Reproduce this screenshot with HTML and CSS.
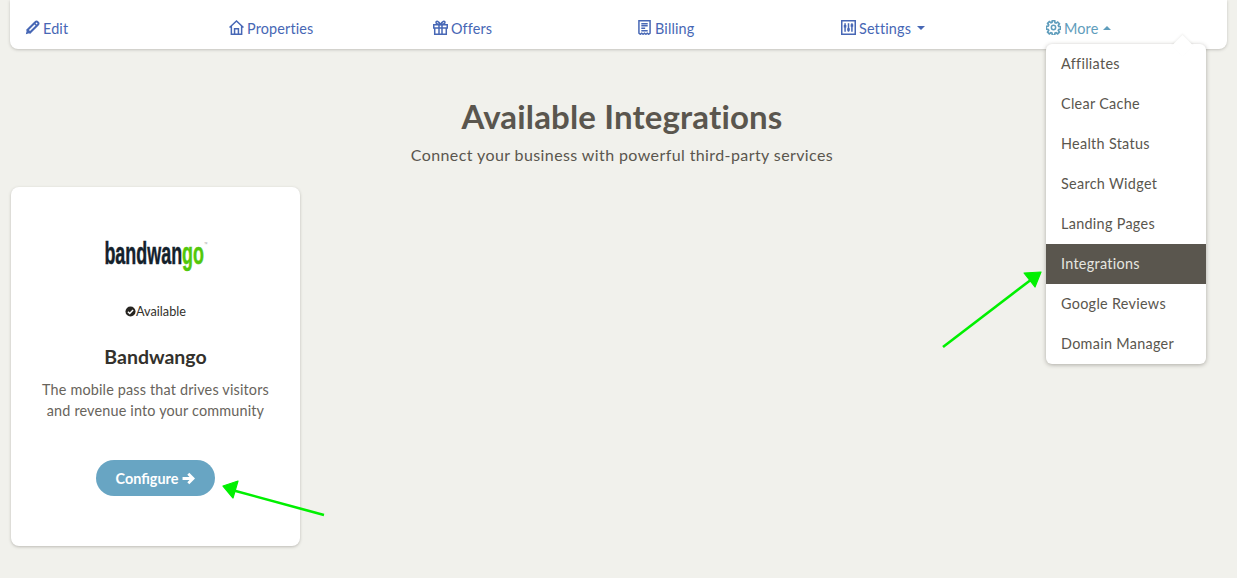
FILE: index.html
```html
<!DOCTYPE html>
<html lang="en">
<head>
<meta charset="utf-8">
<title>Available Integrations</title>
<link rel="stylesheet" href="styles.css">
</head>
<body>
<nav class="topnav">
  <a class="nav-item"><svg class="ico" viewBox="0 0 14 14"><path class="fl" d="M.8 13.2l1-4.2 2.9 3.2z"/><path class="ln thick" d="M2.3 9.3L9.8 1.8a1.3 1.3 0 0 1 1.9 0l.5.5a1.3 1.3 0 0 1 0 1.9L4.7 11.7z"/><path class="ln" d="M8.7 3l2.3 2.3"/></svg>Edit</a>
  <a class="nav-item"><svg class="ico" viewBox="0 0 14 14"><path class="ln" d="M.5 7L7 1l6.5 6M2.2 5.6v7.6h9.6V5.6"/><path class="ln" d="M5.2 13V8.2h3.6V13"/></svg>Properties</a>
  <a class="nav-item"><svg class="ico" viewBox="0 0 14 14"><path class="ln" d="M.7 4.4h12.6v3H.7zM1.6 7.4v6h10.8v-6M5.6 4.4v9M8.4 4.4v9"/><path class="ln" d="M7 4.2C5.5 1 3 .6 2.8 2.2 2.7 3.6 5 4.2 7 4.2zM7 4.2c1.5-3.2 4-3.6 4.2-2 .1 1.4-2.2 2-4.2 2z"/></svg>Offers</a>
  <a class="nav-item"><svg class="ico" viewBox="0 0 14 14"><path class="ln" d="M1.8.7h10.4v11.6l-1.3 1-1.3-1-1.3 1-1.3-1-1.3 1-1.3-1-1.3 1-1.3-1z"/><path class="ln" d="M4 3.4h6M4 5.4h6M4 7.6h3.6M4 10h6"/></svg>Billing</a>
  <a class="nav-item"><svg class="ico" viewBox="0 0 14 14"><path class="ln" d="M.7.8h12.6v12.4H.7z"/><path class="ln" d="M3.8 3v8M7 3v8M10.2 3v8"/><path class="fl" d="M2.6 4.6h2.4v2.4H2.6zM5.8 7.6h2.4V10H5.8zM9 4h2.4v2.4H9z"/></svg>Settings<span class="caret"></span></a>
  <a class="nav-item open"><svg class="ico" viewBox="0 0 14 14"><circle class="ln" cx="7" cy="7" r="2"/><path class="ln heavy" d="M5.9.7h2.2l.3 1.8 1 .4 1.5-1 1.6 1.6-1 1.5.4 1 1.8.3v2.2l-1.8.3-.4 1 1 1.5-1.6 1.6-1.5-1-1 .4-.3 1.8H5.9l-.3-1.8-1-.4-1.5 1-1.6-1.6 1-1.5-.4-1-1.8-.3V5.9l1.8-.3.4-1-1-1.5 1.6-1.6 1.5 1 1-.4z"/></svg>More<span class="caret up"></span></a>
</nav>

<div class="menu">
  <a class="menu-item">Affiliates</a>
  <a class="menu-item">Clear Cache</a>
  <a class="menu-item">Health Status</a>
  <a class="menu-item">Search Widget</a>
  <a class="menu-item">Landing Pages</a>
  <a class="menu-item active">Integrations</a>
  <a class="menu-item">Google Reviews</a>
  <a class="menu-item">Domain Manager</a>
</div>

<header class="head">
  <h1>Available Integrations</h1>
  <p>Connect your business with powerful third-party services</p>
</header>

<section class="card">
  <div class="logo"><span class="logo-a">bandwan</span><span class="logo-b">go</span><span class="logo-tm">™</span></div>
  <div class="status"><svg class="check" viewBox="0 0 12 12"><circle cx="6" cy="6" r="5.5"/><path d="M3.2 6.2l2 2 3.6-3.8"/></svg>Available</div>
  <h2>Bandwango</h2>
  <p class="desc">The mobile pass that drives visitors and revenue into your community</p>
  <a class="btn">Configure <svg class="btn-arrow" viewBox="0 0 12 12"><path d="M.5 6h9.5M5.8 1.6L10.2 6l-4.4 4.4"/></svg></a>
</section>

<svg class="annot" viewBox="0 0 1237 578">
  <path class="arrow-line" d="M943 347L1032 279"/>
  <path class="arrow-head" d="M1041 272L1024 273L1035 287z"/>
  <path class="arrow-line" d="M324 515L232 490"/>
  <path class="arrow-head" d="M223 486L238 481L233 498z"/>
</svg>
</body>
</html>
```
FILE: styles.css
```css
* { box-sizing: border-box; }
html, body { margin: 0; height: 100%; }
body {
  background: #f1f1ec;
  font-family: "Lato", "Noto Sans", sans-serif;
  color: #5a564e;
  height: 578px;
  overflow: hidden;
  padding: 0 10px;
}
.topnav {
  height: 49px;
  background: #fff;
  border-radius: 0 0 8px 8px;
  box-shadow: 0 1px 3px rgba(90, 86, 78, .3);
  display: grid;
  grid-template-columns: repeat(5, 204px) 1fr;
  padding: 19px 0 0 15px;
}
.nav-item {
  display: flex;
  align-items: center;
  height: 18px;
  font-size: 14.4px;
  letter-spacing: .15px;
  color: #4767b5;
}
.nav-item.open { color: #5f9dbc; }
.ico { width: 15px; height: 15px; margin: -1px 3px 0 0; flex: none; }
.open .ico { margin-left: 1px; }
.ln { fill: none; stroke: currentColor; stroke-width: 1.4; }
.ln.thick { stroke-width: 1.9; }
.ln.heavy { stroke-width: 1.6; }
.fl { fill: currentColor; }
.caret {
  width: 0; height: 0;
  margin-left: 6px;
  border: 4px solid transparent;
  border-bottom-width: 0;
  border-top-color: currentColor;
}
.caret.up {
  margin-left: 5px;
  border-top-width: 0;
  border-bottom: 4px solid currentColor;
}
.menu {
  position: absolute;
  left: 1046px;
  top: 44px;
  width: 160px;
  background: #fff;
  border-radius: 6px;
  box-shadow: 0 1px 4px rgba(90, 86, 78, .45);
}
.menu::before {
  content: "";
  position: absolute;
  left: 129px;
  top: -6px;
  width: 15px;
  height: 15px;
  background: #fff;
  transform: rotate(45deg);
  box-shadow: -1px -1px 2px rgba(90, 86, 78, .08);
}
.menu-item {
  position: relative;
  display: flex;
  align-items: center;
  height: 40px;
  padding: 0 0 1px 15px;
  font-size: 14.4px;
  letter-spacing: .3px;
  color: #5a564e;
}
.menu-item.active { background: #5a564e; color: #e6e6e0; }
.head { padding-left: 7px; text-align: center; }
.head h1 {
  margin: 46px 0 0;
  font-size: 33px;
  line-height: 42px;
  font-weight: 700;
  letter-spacing: .15px;
  color: #5a564e;
}
.head p {
  margin: 7px 0 0;
  font-size: 16px;
  line-height: 22px;
  letter-spacing: .4px;
}
.card {
  width: 289px;
  height: 359px;
  margin: 21px 0 0 1px;
  background: #fff;
  border-radius: 8px;
  box-shadow: 0 1px 3px rgba(90, 86, 78, .35);
  display: flex;
  flex-direction: column;
  align-items: center;
  text-align: center;
}
.logo {
  margin-top: 47px;
  height: 39px;
  font-family: "Liberation Sans", sans-serif;
  font-weight: 700;
  font-size: 32px;
  line-height: 38px;
  white-space: nowrap;
  -webkit-text-stroke: .5px currentColor;
  transform: scaleX(.56);
}
.logo-a { color: #14212b; }
.logo-b { color: #52c80a; }
.logo-tm {
  font-size: 6px;
  font-weight: 400;
  line-height: 0;
  vertical-align: 18px;
  color: #a5a5a5;
  -webkit-text-stroke: 0;
}
.status {
  margin-top: 30px;
  display: flex;
  align-items: center;
  font-size: 12.7px;
  line-height: 16px;
  color: #33312c;
}
.check { width: 11px; height: 11px; }
.check circle { fill: #262420; }
.check path { fill: none; stroke: #fff; stroke-width: 1.6; }
.card h2 {
  margin: 26px 0 0;
  font-size: 19.5px;
  line-height: 24px;
  font-weight: 700;
  color: #33312c;
}
.desc {
  margin: 10px 0 0;
  width: 240px;
  font-size: 14.4px;
  line-height: 21px;
  letter-spacing: .17px;
  color: #68645c;
}
.btn {
  margin-top: 39px;
  width: 119px;
  height: 36px;
  border-radius: 18px;
  background: #68a5c3;
  color: #fff;
  font-size: 14.4px;
  font-weight: 700;
  display: flex;
  align-items: center;
  justify-content: center;
  gap: 4px;
}
.btn-arrow { width: 13px; height: 13px; fill: none; stroke: #fff; stroke-width: 2.6; }
.annot {
  position: absolute;
  left: 0;
  top: 0;
  width: 1237px;
  height: 578px;
  pointer-events: none;
}
.arrow-line { fill: none; stroke: #00f000; stroke-width: 2.6; }
.arrow-head { fill: #00f000; stroke: #00f000; stroke-width: 1.2; stroke-linejoin: round; }
```
